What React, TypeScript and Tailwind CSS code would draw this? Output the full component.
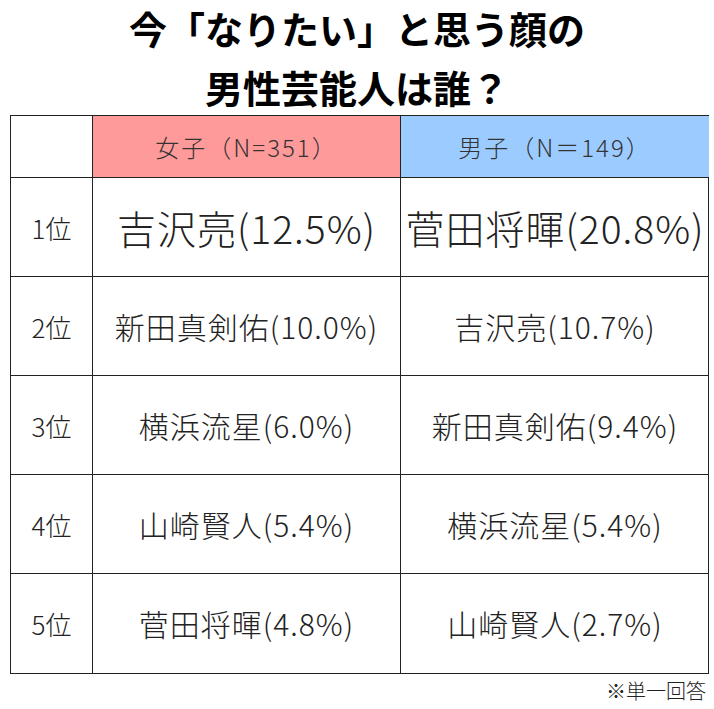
const rows = [
  { rank: "1位", girl: "吉沢亮(12.5%)", boy: "菅田将暉(20.8%)", big: true },
  { rank: "2位", girl: "新田真剣佑(10.0%)", boy: "吉沢亮(10.7%)" },
  { rank: "3位", girl: "横浜流星(6.0%)", boy: "新田真剣佑(9.4%)" },
  { rank: "4位", girl: "山崎賢人(5.4%)", boy: "横浜流星(5.4%)" },
  { rank: "5位", girl: "菅田将暉(4.8%)", boy: "山崎賢人(2.7%)" },
];

export default function App() {
  return (
    <div
      className="w-[714px] h-[709px] bg-white text-[#222]"
      style={{ fontFamily: '"Noto Sans CJK JP", "Noto Sans", sans-serif' }}
    >
      <div className="h-[115px] flex flex-col items-center">
        <div className="leading-[56px] text-[38px] font-bold text-black">
          今「なりたい」と思う顔の
        </div>
        <div className="mt-[3px] leading-[56px] text-[38px] font-bold text-black">
          男性芸能人は誰？
        </div>
      </div>

      <div className="ml-[10px] w-[699px] border border-[#222] grid grid-cols-[82px_308px_308px] font-light">
        <div className="h-[62px] border-r border-b border-[#222]" />
        <div className="h-[62px] border-r border-b border-[#222] bg-[#ff9a9a] flex items-center justify-center text-[24px] text-[#333] tracking-[2px]">
          女子（N=351）
        </div>
        <div className="h-[62px] border-b border-[#222] bg-[#9ccbff] flex items-center justify-center text-[24px] text-[#333] tracking-[2px]">
          男子（N＝149）
        </div>

        {rows.map((r, i) => {
          const last = i === rows.length - 1;
          const b = last ? "" : "border-b";
          const size = r.big ? "text-[39px]" : "text-[30px]";
          return (
            <div key={r.rank} className="contents">
              <div className={`h-[99px] border-r ${b} border-[#222] flex items-center justify-center text-[26px]`}>
                {r.rank}
              </div>
              <div className={`h-[99px] border-r ${b} border-[#222] flex items-center justify-center tracking-[1px] ${size}`}>
                {r.girl}
              </div>
              <div className={`h-[99px] ${b} border-[#222] flex items-center justify-center tracking-[1px] ${size}`}>
                {r.boy}
              </div>
            </div>
          );
        })}
      </div>

      <div className="w-[706px] mt-[5px] text-right text-[20px] leading-[24px] font-light">※単一回答</div>
    </div>
  );
}
